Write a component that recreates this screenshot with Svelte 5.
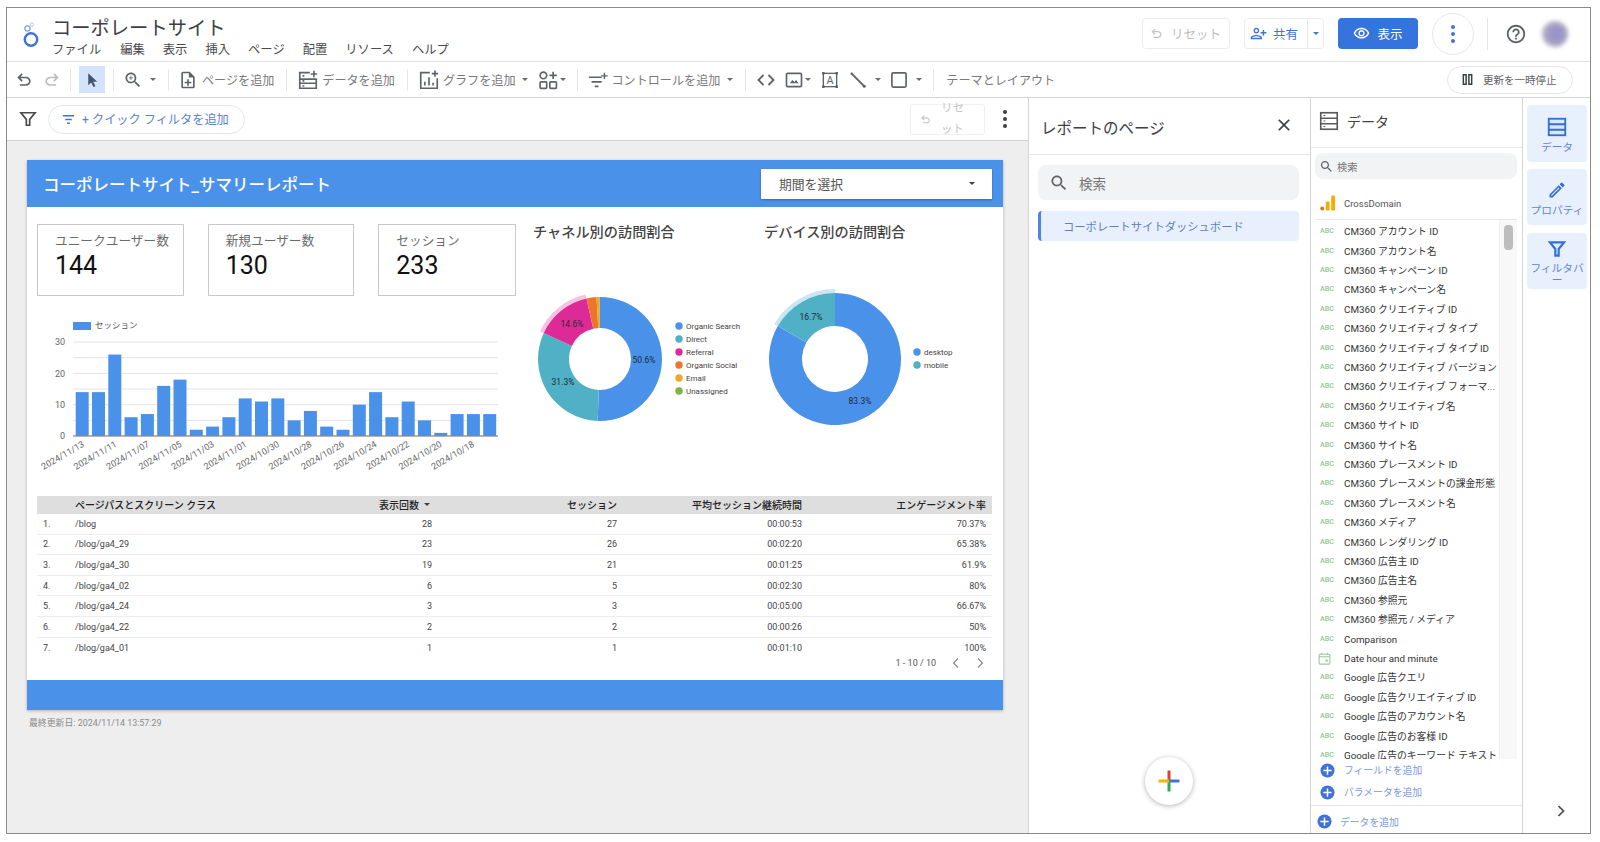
<script>
  const menus = [['ファイル','m0'],['編集','m1'],['表示','m2'],['挿入','m3'],['ページ','m4'],['配置','m5'],['リソース','m6'],['ヘルプ','m7']];

  const bars = [14,14,26,6,7,16,18,2,3,6,12,11,12,5,8,3,2,10,14,6,11,5,1,7,7,7];
  const dates = ['2024/11/13','2024/11/11','2024/11/07','2024/11/05','2024/11/03','2024/11/01','2024/10/30','2024/10/28','2024/10/26','2024/10/24','2024/10/22','2024/10/20','2024/10/18'];
  const grid = [26, 41.7, 57.4, 73, 88.7, 104.4, 120];

  function point(cx, cy, r, t) {
    const a = t * 2 * Math.PI;
    return [cx + r * Math.sin(a), cy - r * Math.cos(a)];
  }
  function ring(cx, cy, r0, r1, t0, t1) {
    const large = t1 - t0 > 0.5 ? 1 : 0;
    const [ax, ay] = point(cx, cy, r1, t0);
    const [bx, by] = point(cx, cy, r1, t1);
    const [dx, dy] = point(cx, cy, r0, t1);
    const [ex, ey] = point(cx, cy, r0, t0);
    return `M${ax} ${ay}A${r1} ${r1} 0 ${large} 1 ${bx} ${by}L${dx} ${dy}A${r0} ${r0} 0 ${large} 0 ${ex} ${ey}Z`;
  }
  function slices(values, cx, cy, r0, r1) {
    let t = 0;
    return values.map(([v, c]) => {
      const s = { d: ring(cx, cy, r0, r1, t, t + v), c };
      t += v;
      return s;
    });
  }
  const channel = slices([[0.506,'#4a91ea'],[0.313,'#4fb0c6'],[0.146,'#de2a97'],[0.026,'#e9762c'],[0.008,'#f5a623'],[0.001,'#7cb342']], 70, 109, 31, 62);
  const device = slices([[0.833,'#4a91ea'],[0.167,'#4fb0c6']], 75, 109, 33, 66);
  const chLegend = [['Organic Search','#4a91ea'],['Direct','#4fb0c6'],['Referral','#de2a97'],['Organic Social','#e9762c'],['Email','#f5a623'],['Unassigned','#7cb342']];
  const devLegend = [['desktop','#4a91ea'],['mobile','#4fb0c6']];

  const rows = [
    ['1.','/blog','28','27','00:00:53','70.37%'],
    ['2.','/blog/ga4_29','23','26','00:02:20','65.38%'],
    ['3.','/blog/ga4_30','19','21','00:01:25','61.9%'],
    ['4.','/blog/ga4_02','6','5','00:02:30','80%'],
    ['5.','/blog/ga4_24','3','3','00:05:00','66.67%'],
    ['6.','/blog/ga4_22','2','2','00:00:26','50%'],
    ['7.','/blog/ga4_01','1','1','00:01:10','100%']
  ];

  const fields = ['CM360 アカウント ID','CM360 アカウント名','CM360 キャンペーン ID','CM360 キャンペーン名','CM360 クリエイティブ ID','CM360 クリエイティブ タイプ','CM360 クリエイティブ タイプ ID','CM360 クリエイティブ バージョン','CM360 クリエイティブ フォーマ...','CM360 クリエイティブ名','CM360 サイト ID','CM360 サイト名','CM360 プレースメント ID','CM360 プレースメントの課金形態','CM360 プレースメント名','CM360 メディア','CM360 レンダリング ID','CM360 広告主 ID','CM360 広告主名','CM360 参照元','CM360 参照元 / メディア','Comparison','Date hour and minute','Google 広告クエリ','Google 広告クリエイティブ ID','Google 広告のアカウント名','Google 広告のお客様 ID','Google 広告のキーワード テキスト'];
  const isLatin = (s) => /^[\x00-\x7f]*$/.test(s);

  const undoD = 'M280-200v-80h284q63 0 109.5-40T720-420q0-60-46.5-100T564-560H312l104 104-56 56-200-200 200-200 56 56-104 104h252q97 0 166.5 63T800-420q0 94-69.5 157T564-200H280Z';
  const searchD = 'M15.5 14h-.79l-.28-.27C15.41 12.59 16 11.11 16 9.5 16 5.91 13.09 3 9.5 3S3 5.91 3 9.5 5.91 16 9.5 16c1.61 0 3.09-.59 4.23-1.57l.27.28v.79l5 4.99L20.49 19l-4.99-5zm-6 0C7.01 14 5 11.99 5 9.5S7.01 5 9.5 5 14 7.01 14 9.5 11.99 14 9.5 14z';
</script>

{#snippet sep(cls)}
  <span class="sep {cls}"></span>
{/snippet}

{#snippet dataIcon(color)}
  <svg class="i22" viewBox="0 0 24 24" fill="none" stroke={color} stroke-width="1.8">
    <rect x="3" y="3" width="18" height="18"/>
    <path d="M3 9h18M3 15h18"/>
    <path d="M6 6h2M6 12h2M6 18h2" stroke-width="1.2"/>
  </svg>
{/snippet}

{#snippet plusRound()}
  <svg class="plusround" viewBox="0 0 16 16">
    <circle cx="8" cy="8" r="7.5" fill="#3f73da"/>
    <path d="M8 3.6v8.8M3.6 8h8.8" stroke="#fff" stroke-width="1.6"/>
  </svg>
{/snippet}

<div class="page">
  <div class="frame">
    <header class="head">
      <svg class="logo" viewBox="0 0 24 32" fill="none">
        <circle cx="12" cy="20.5" r="6.2" stroke="#3f73da" stroke-width="2.4"/>
        <circle cx="8.5" cy="9.5" r="2.6" stroke="#7ea3e6" stroke-width="1.3"/>
        <circle cx="12.8" cy="5.5" r="1.7" stroke="#b5c8ee" stroke-width="1"/>
      </svg>
      <div class="titles">
        <div class="doc">コーポレートサイト</div>
        <nav class="menu">
          {#each menus as [label, cls]}
            <span class={cls}>{label}</span>
          {/each}
        </nav>
      </div>
      <div class="actions">
        <div class="btn reset">
          <svg class="i15" viewBox="0 -960 960 960" fill="#c4c4c4"><path d={undoD}/></svg>
          <span>リセット</span>
        </div>
        <div class="btn share">
          <div class="share-main">
            <svg class="i17 flip" viewBox="0 0 24 24" fill="#3f73da"><path d="M15 12c2.21 0 4-1.79 4-4s-1.79-4-4-4-4 1.79-4 4 1.79 4 4 4zm0-6c1.1 0 2 .9 2 2s-.9 2-2 2-2-.9-2-2 .9-2 2-2zm0 8c-2.67 0-8 1.34-8 4v2h16v-2c0-2.66-5.33-4-8-4zm-6 4c.22-.72 3.31-2 6-2 2.7 0 5.8 1.29 6 2H9zm-3-3v-3h3v-2H6V7H4v3H1v2h3v3h2z"/></svg>
            <span>共有</span>
          </div>
          <div class="share-drop"><span class="caret blue"></span></div>
        </div>
        <div class="view">
          <svg class="i17" viewBox="0 0 24 24" fill="#fff"><path d="M12 6c3.79 0 7.17 2.13 8.82 5.5C19.17 14.87 15.79 17 12 17s-7.17-2.13-8.82-5.5C4.83 8.13 8.21 6 12 6m0-2C7 4 2.73 7.11 1 11.5 2.73 15.89 7 19 12 19s9.27-3.11 11-7.5C21.27 7.11 17 4 12 4zm0 5c1.38 0 2.5 1.12 2.5 2.5S13.38 14 12 14s-2.5-1.12-2.5-2.5S10.62 9 12 9m0-2c-2.48 0-4.5 2.02-4.5 4.5S9.52 16 12 16s4.5-2.02 4.5-4.5S14.48 7 12 7z"/></svg>
          <span>表示</span>
        </div>
        <div class="circle">
          <span class="dots blue"><i></i><i></i><i></i></span>
        </div>
        <span class="vr"></span>
        <svg class="help" viewBox="0 0 24 24" fill="#5f6368"><path d="M11 18h2v-2h-2v2zm1-16C6.48 2 2 6.48 2 12s4.48 10 10 10 10-4.48 10-10S17.52 2 12 2zm0 18c-4.41 0-8-3.59-8-8s3.59-8 8-8 8 3.59 8 8-3.59 8-8 8zm0-14c-2.21 0-4 1.79-4 4h2c0-1.1.9-2 2-2s2 .9 2 2c0 2-3 1.75-3 5h2c0-2.25 3-2.5 3-5 0-2.21-1.79-4-4-4z"/></svg>
        <span class="avatar"></span>
      </div>
    </header>

    <div class="toolbar">
      <svg class="i20 ml7" viewBox="0 -960 960 960" fill="#5f6368"><path d={undoD}/></svg>
      <svg class="i20 flip ml8" viewBox="0 -960 960 960" fill="#bdbdbd"><path d={undoD}/></svg>
      {@render sep('ml8')}
      <div class="select ml8">
        <svg class="i18" viewBox="0 0 24 24" fill="#44546f"><path d="M7 3v16l4-3.6 3 6 2.6-1.2-3-5.9H19z"/></svg>
      </div>
      {@render sep('ml8')}
      <svg class="i20 ml9" viewBox="0 0 24 24" fill="#5f6368"><path d={searchD}/><path d="M12 10h-2v2H9v-2H7V9h2V7h1v2h2v1z"/></svg>
      <span class="caret ml7"></span>
      {@render sep('ml12')}
      <svg class="i20 ml9" viewBox="0 0 24 24" fill="#5f6368"><path d="M13 11h-2v3H8v2h3v3h2v-3h3v-2h-3zm1-9H6c-1.1 0-2 .9-2 2v16c0 1.1.89 2 1.99 2H18c1.1 0 2-.9 2-2V8l-6-6zm4 18H6V4h7v5h5v11z"/></svg>
      <span class="tb-text ml4">ページを追加</span>
      {@render sep('ml12')}
      <svg class="i22 ml10" viewBox="0 0 24 24" fill="none" stroke="#5f6368" stroke-width="1.8">
        <path d="M14 4H3v17h18V11H3M3 15.5h18M6 7.5h2M6 13h2M6 18.5h2"/>
        <path d="M18.5 2v7M15 5.5h7" stroke="#5f6368"/>
      </svg>
      <span class="tb-text ml3">データを追加</span>
      {@render sep('ml12')}
      <svg class="i22 ml10" viewBox="0 0 24 24" fill="none" stroke="#5f6368" stroke-width="1.8">
        <path d="M13 4H3v17h18V10"/>
        <path d="M7.5 18v-4M12 18V9M16.5 18v-3"/>
        <path d="M18.5 1.5v7M15 5h7"/>
      </svg>
      <span class="tb-text ml3">グラフを追加</span>
      <span class="caret ml7"></span>
      <svg class="i22 ml9" viewBox="0 0 24 24" fill="none" stroke="#5f6368" stroke-width="1.8">
        <circle cx="7" cy="7" r="3.6"/>
        <rect x="3.4" y="14" width="7.2" height="7.2" rx="1"/>
        <rect x="14" y="14" width="7.2" height="7.2" rx="1"/>
        <path d="M17.6 3v8M13.6 7h8"/>
      </svg>
      <span class="caret ml1"></span>
      {@render sep('ml11')}
      <svg class="i22 ml9" viewBox="0 0 24 24" fill="none" stroke="#5f6368" stroke-width="1.8">
        <path d="M2 9h14M5 14h11M8.5 19h4"/>
        <path d="M19 4v7M15.5 7.5h7" stroke-width="1.6"/>
      </svg>
      <span class="tb-text ml2">コントロールを追加</span>
      <span class="caret ml7"></span>
      {@render sep('ml12')}
      <svg class="i20 ml10" viewBox="0 0 24 24" fill="none" stroke="#5f6368" stroke-width="2.2"><path d="M9 6l-6 6 6 6M15 6l6 6-6 6"/></svg>
      <svg class="i20 ml8" viewBox="0 0 24 24" fill="none" stroke="#5f6368" stroke-width="2">
        <rect x="3" y="4" width="18" height="16" rx="1.5"/>
        <path d="M7 16l3-4 2.5 2.5L14.5 12l3 4z" fill="#5f6368" stroke="none"/>
      </svg>
      <span class="caret ml1"></span>
      <svg class="i20 ml9" viewBox="0 0 24 24" fill="none" stroke="#5f6368" stroke-width="1.6">
        <rect x="4" y="4" width="16" height="16"/>
        <path d="M2.5 2.5h3v3h-3zM18.5 2.5h3v3h-3zM2.5 18.5h3v3h-3zM18.5 18.5h3v3h-3z" fill="#5f6368" stroke="none"/>
        <text x="12" y="17" text-anchor="middle" class="iconA">A</text>
      </svg>
      <svg class="i20 ml8" viewBox="0 0 24 24" fill="#5f6368" stroke="#5f6368" stroke-width="2.4">
        <path d="M5 5l14 14"/>
        <circle cx="4.5" cy="4.5" r="1.5" stroke="none"/>
        <circle cx="19.5" cy="19.5" r="1.8" stroke="none"/>
      </svg>
      <span class="caret ml7"></span>
      <svg class="i20 ml8" viewBox="0 0 24 24" fill="none" stroke="#5f6368" stroke-width="2"><rect x="3.5" y="3.5" width="17" height="17" rx="1.5"/></svg>
      <span class="caret ml7"></span>
      {@render sep('ml11')}
      <span class="tb-text ml12">テーマとレイアウト</span>
      <div class="pause">
        <svg class="i13" viewBox="0 0 14 14" fill="none" stroke="#3c4043" stroke-width="1.6"><path d="M2.5 2h3v10h-3zM8.5 2h3v10h-3z"/></svg>
        <span>更新を一時停止</span>
      </div>
    </div>

    <main class="main">
      <section class="work">
        <div class="filterbar">
          <svg class="i20 fb-funnel" viewBox="0 0 24 24" fill="none" stroke="#4a4a4a" stroke-width="2"><path d="M3.5 4.5h17l-6.5 8v7h-4v-7z"/></svg>
          <div class="chip">
            <svg class="i15" viewBox="0 0 16 16" stroke="#3f73da" stroke-width="1.5"><path d="M2 4h12M4.5 8h7M6.5 12h3"/></svg>
            <span>+ クイック フィルタを追加</span>
          </div>
          <div class="fb-right">
            <div class="mini-reset">
              <svg class="i13" viewBox="0 -960 960 960" fill="#c4c4c4"><path d={undoD}/></svg>
              <span>リセット</span>
            </div>
            <span class="dots dark"><i></i><i></i><i></i></span>
          </div>
        </div>

        <div class="canvas">
          <article class="report">
            <div class="r-head">
              <h1>コーポレートサイト_サマリーレポート</h1>
              <div class="period">
                <span>期間を選択</span>
                <span class="caret dark"></span>
              </div>
            </div>

            <div class="r-body">
              <div class="r-top">
                <div class="r-left">
                  <div class="cards">
                    <div class="card c1"><div class="c-label">ユニークユーザー数</div><div class="c-value">144</div></div>
                    <div class="card c2"><div class="c-label">新規ユーザー数</div><div class="c-value">130</div></div>
                    <div class="card c3"><div class="c-label">セッション</div><div class="c-value">233</div></div>
                  </div>
                  <svg class="barchart" width="480" height="170" viewBox="0 0 480 170">
                    <rect x="36" y="6" width="18" height="8" fill="#4a91ea"/>
                    <text x="58" y="12" class="t85">セッション</text>
                    {#each grid as g, i}
                      <line x1="36" x2="461" y1={g} y2={g} stroke={i === 6 ? '#6b6b6b' : '#e4e4e4'}/>
                    {/each}
                    {#each [[30,26],[20,57.4],[10,88.7],[0,120]] as [v, y]}
                      <text x="28" y={y + 3.2} text-anchor="end" class="t9">{v}</text>
                    {/each}
                    {#each bars as b, i}
                      <rect x={38.7 + i * 16.3} y={120 - b * 3.133} width="13" height={b * 3.133} fill="#4a91ea"/>
                    {/each}
                    {#each dates as d, i}
                      <text transform={`translate(${48 + i * 32.5} 130) rotate(-30)`} text-anchor="end" class="t9">{d}</text>
                    {/each}
                  </svg>
                </div>

                <div class="donut d1">
                  <h2>チャネル別の訪問割合</h2>
                  <svg width="230" height="190" viewBox="0 0 230 190">
                    <path d={ring(70, 109, 62, 66, 0.8185, 0.965)} fill="#f6c2e2"/>
                    {#each channel as s}<path d={s.d} fill={s.c}/>{/each}
                    <text x="114" y="113" text-anchor="middle" class="t85 pct">50.6%</text>
                    <text x="33" y="135" text-anchor="middle" class="t85 pct">31.3%</text>
                    <text x="42" y="77" text-anchor="middle" class="t85 pct">14.6%</text>
                    {#each chLegend as [name, color], i}
                      <circle cx="149" cy={76 + i * 13} r="3.7" fill={color}/>
                      <text x="156" y={79 + i * 13} class="t85 leg">{name}</text>
                    {/each}
                  </svg>
                </div>

                <div class="donut d2">
                  <h2>デバイス別の訪問割合</h2>
                  <svg width="240" height="190" viewBox="0 0 240 190">
                    <path d={ring(75, 109, 66, 70, 0.833, 1)} fill="#cbe6ec"/>
                    {#each device as s}<path d={s.d} fill={s.c}/>{/each}
                    <text x="100" y="154" text-anchor="middle" class="t85 pct">83.3%</text>
                    <text x="51" y="70" text-anchor="middle" class="t85 pct">16.7%</text>
                    {#each devLegend as [name, color], i}
                      <circle cx="157" cy={102 + i * 13} r="3.7" fill={color}/>
                      <text x="164" y={105 + i * 13} class="t85 leg">{name}</text>
                    {/each}
                  </svg>
                </div>
              </div>

              <div class="table">
                <div class="tr th">
                  <span></span>
                  <span class="left">ページパスとスクリーン クラス</span>
                  <span class="sorted">表示回数<span class="caret dark small"></span></span>
                  <span>セッション</span>
                  <span>平均セッション継続時間</span>
                  <span>エンゲージメント率</span>
                </div>
                {#each rows as r}
                  <div class="tr td">
                    <span class="left idx">{r[0]}</span>
                    <span class="left">{r[1]}</span>
                    <span>{r[2]}</span>
                    <span>{r[3]}</span>
                    <span>{r[4]}</span>
                    <span>{r[5]}</span>
                  </div>
                {/each}
                <div class="pager">
                  <span>1 - 10 / 10</span>
                  <svg class="chev first" viewBox="0 0 10 12" fill="none" stroke="#8a8a8a" stroke-width="1.2"><path d="M7 1.5L2.5 6 7 10.5"/></svg>
                  <svg class="chev" viewBox="0 0 10 12" fill="none" stroke="#8a8a8a" stroke-width="1.2"><path d="M3 1.5L7.5 6 3 10.5"/></svg>
                </div>
              </div>
            </div>

            <div class="r-foot"></div>
          </article>
          <div class="updated">最終更新日: 2024/11/14 13:57:29</div>
        </div>
      </section>

      <aside class="pages">
        <div class="p-head">
          <span>レポートのページ</span>
          <svg class="i20" viewBox="0 0 24 24" fill="#3c4043"><path d="M19 6.41 17.59 5 12 10.59 6.41 5 5 6.41 10.59 12 5 17.59 6.41 19 12 13.41 17.59 19 19 17.59 13.41 12z"/></svg>
        </div>
        <div class="p-search">
          <svg class="i20" viewBox="0 0 24 24" fill="#5f6368"><path d={searchD}/></svg>
          <span>検索</span>
        </div>
        <div class="p-item">コーポレートサイトダッシュボード</div>
        <div class="fab">
          <svg width="24" height="24" viewBox="0 0 24 24" stroke-width="3">
            <path d="M12 1.5V12" stroke="#d9432f"/>
            <path d="M12 12h10.5" stroke="#3f73da"/>
            <path d="M12 12v10.5" stroke="#34a853"/>
            <path d="M1.5 12H12" stroke="#f4b400"/>
          </svg>
        </div>
      </aside>

      <aside class="data">
        <div class="d-head">
          {@render dataIcon('#5a5a5a')}
          <span>データ</span>
        </div>
        <div class="d-search">
          <svg class="i15" viewBox="0 0 24 24" fill="#5f6368"><path d={searchD}/></svg>
          <span>検索</span>
        </div>
        <div class="d-source">
          <svg width="16" height="16" viewBox="0 0 16 16">
            <circle cx="2.2" cy="13.5" r="1.9" fill="#e8710a"/>
            <rect x="5.8" y="6.5" width="3.8" height="9" rx="1" fill="#f9ab00"/>
            <rect x="11.2" y="0.5" width="3.8" height="15" rx="1" fill="#f9ab00"/>
          </svg>
          <span>CrossDomain</span>
        </div>
        <div class="d-listwrap">
          <div class="d-list">
            {#each fields as f}
              <div class="field" class:latin={isLatin(f)}>
                {#if f === 'Date hour and minute'}
                  <svg class="cal" viewBox="0 0 12 12" fill="none" stroke="#9ac79a" stroke-width="1"><rect x="1" y="2" width="10" height="9.2" rx="1"/><path d="M1 4.4h10M3.4.6v1.6M8.6.6v1.6"/><rect x="7" y="7" width="2" height="2" fill="#9ac79a" stroke="none"/></svg>
                {:else}
                  <span class="abc">ABC</span>
                {/if}
                <span class="f-name">{f}</span>
              </div>
            {/each}
          </div>
          <div class="gutter"><div class="thumb"></div></div>
        </div>
        <div class="d-adds">
          <div class="add">{@render plusRound()}<span>フィールドを追加</span></div>
          <div class="add">{@render plusRound()}<span>パラメータを追加</span></div>
        </div>
        <div class="d-addsrc">
          {@render plusRound()}<span>データを追加</span>
        </div>
      </aside>

      <aside class="rail">
        <div class="tab t1">
          <svg class="i22" viewBox="0 0 24 24" fill="#dbe7fb" stroke="#2f6fde" stroke-width="2">
            <rect x="3" y="3" width="18" height="18"/>
            <path d="M3 9h18M3 15h18"/>
          </svg>
          <span>データ</span>
        </div>
        <div class="tab t2">
          <svg class="i20" viewBox="0 0 24 24" fill="#2f6fde"><path d="M3 17.25V21h3.75L17.81 9.94l-3.75-3.75L3 17.25zM5.92 19H5v-.92l9.06-9.06.92.92L5.92 19zM20.71 7.04a1 1 0 0 0 0-1.41l-2.34-2.34a1 1 0 0 0-1.41 0l-1.83 1.83 3.75 3.75 1.83-1.83z"/></svg>
          <span>プロパティ</span>
        </div>
        <div class="tab t3">
          <svg class="i20" viewBox="0 0 24 24" fill="none" stroke="#2f6fde" stroke-width="2.6"><path d="M3.5 4h17l-6.5 8v8h-4v-8z"/></svg>
          <span>フィルタバー</span>
        </div>
        <svg class="rail-chev" viewBox="0 0 12 14" fill="none" stroke="#4a4a4a" stroke-width="1.7"><path d="M3.5 2l5 5-5 5"/></svg>
      </aside>
    </main>
  </div>
</div>

<style>
  :global(body) { margin: 0; background: #fff; }
  .page {
    width: 1600px; height: 842px; box-sizing: border-box; padding: 7px 0 0 6px; overflow: hidden;
    font-family: Roboto, "Noto Sans CJK JP", sans-serif; color: #3c4043;
  }
  .frame {
    width: 1585px; height: 827px; box-sizing: border-box; border: 1px solid #8a8a8a;
    display: flex; flex-direction: column; background: #fff;
  }
  svg { display: block; flex: none; }
  .flip { transform: scaleX(-1); }
  .i13 { width: 13px; height: 13px; }
  .i15 { width: 15px; height: 15px; }
  .i17 { width: 17px; height: 17px; }
  .i18 { width: 18px; height: 18px; }
  .i20 { width: 20px; height: 20px; }
  .i22 { width: 22px; height: 22px; }

  .head { height: 53px; flex: none; display: flex; align-items: center; border-bottom: 1px solid #e0e0e0; }
  .logo { width: 24px; height: 32px; margin-left: 12px; }
  .titles { margin-left: 9px; align-self: flex-start; padding-top: 9px; }
  .doc { font-size: 19.3px; line-height: 24px; color: #3c4043; }
  .menu { display: flex; font-size: 12.3px; line-height: 16px; color: #4a4a4a; margin-top: 1px; }
  .m1 { margin-left: 19px; }
  .m2, .m3, .m4, .m5, .m6, .m7 { margin-left: 18px; }

  .actions { margin-left: auto; display: flex; align-items: center; height: 100%; padding-bottom: 2px; box-sizing: border-box; }
  .btn { height: 31px; box-sizing: border-box; border: 1px solid #ececec; border-radius: 4px; display: flex; align-items: center; font-size: 12.5px; }
  .reset { width: 88px; padding-left: 6px; gap: 7px; color: #bdbdbd; }
  .share { width: 80px; margin-left: 14px; color: #3f73da; }
  .share-main { width: 63px; height: 100%; display: flex; align-items: center; gap: 6px; padding-left: 5px; box-sizing: border-box; border-right: 1px solid #e6e6e6; }
  .share-drop { flex: 1; display: flex; justify-content: center; }
  .view { width: 80px; height: 31px; margin-left: 14px; border-radius: 4px; background: #3574dc; color: #fff; display: flex; align-items: center; justify-content: center; gap: 7px; font-size: 12.5px; }
  .circle { width: 42px; height: 42px; box-sizing: border-box; margin-left: 14px; border-radius: 50%; border: 1px solid #e8e8e8; display: flex; align-items: center; justify-content: center; }
  .dots { display: flex; flex-direction: column; gap: 3px; }
  .dots i { width: 4px; height: 4px; border-radius: 50%; background: #3f73da; }
  .dots.dark i { background: #3c4043; }
  .vr { width: 1px; height: 32px; background: #e6e6e6; margin-left: 13px; }
  .help { width: 22px; height: 22px; margin-left: 17px; }
  .avatar { width: 26px; height: 26px; margin: 0 22px 0 15px; border-radius: 50%; background: radial-gradient(circle at 55% 50%, #9a94c8 0 30%, #b5aec4 65%, #cfcbd2 100%); filter: blur(2px); }

  .caret { display: block; flex: none; width: 0; height: 0; border-left: 3.5px solid transparent; border-right: 3.5px solid transparent; border-top: 3.5px solid #6b6b6b; }
  .caret.blue { border-top-color: #3f73da; }
  .caret.dark { border-top-color: #3c4043; }
  .caret.small { margin-left: 5px; border-left-width: 3px; border-right-width: 3px; border-top-width: 3px; }

  .toolbar { height: 35px; flex: none; display: flex; align-items: center; border-bottom: 1px solid #d4d4d4; }
  .sep { display: block; flex: none; width: 1px; height: 22px; background: #e8e8e8; }
  .tb-text { font-size: 12.1px; color: #7a7a7a; white-space: nowrap; }
  .select { width: 26px; height: 27px; background: #d3e3fa; display: flex; align-items: center; justify-content: center; flex: none; }
  .ml1 { margin-left: 1px; } .ml2 { margin-left: 2px; } .ml3 { margin-left: 3px; } .ml4 { margin-left: 4px; }
  .ml7 { margin-left: 7px; } .ml8 { margin-left: 8px; } .ml9 { margin-left: 9px; }
  .ml10 { margin-left: 10px; } .ml11 { margin-left: 11px; } .ml12 { margin-left: 12px; }
  .pause { margin-left: auto; margin-right: 17px; width: 126px; height: 28px; box-sizing: border-box; border: 1px solid #e6e6e6; border-radius: 14px; display: flex; align-items: center; padding-left: 13px; gap: 9px; font-size: 10.5px; color: #5f6368; }

  .main { flex: 1; min-height: 0; display: flex; }
  .work { width: 1021px; flex: none; display: flex; flex-direction: column; }
  .filterbar { height: 42px; flex: none; display: flex; align-items: center; border-bottom: 1px solid #d4d4d4; }
  .fb-funnel { margin-left: 11px; }
  .chip { margin-left: 10px; width: 197px; height: 29px; box-sizing: border-box; border: 1px solid #e6e6e6; border-radius: 15px; display: flex; align-items: center; gap: 6px; padding-left: 12px; font-size: 12.2px; color: #5b82cf; }
  .fb-right { margin-left: auto; display: flex; align-items: center; }
  .mini-reset { width: 75px; height: 31px; box-sizing: border-box; border: 1px solid #f0f0f0; border-radius: 3px; display: flex; align-items: center; gap: 6px; padding-left: 8px; }
  .mini-reset span { width: 25px; margin-left: 2px; font-size: 11.5px; line-height: 21px; color: #c4c4c4; text-align: center; display: block; flex: none; }
  .fb-right .dots { margin: 0 21px 0 18px; }

  .canvas { flex: 1; background: #eeeeee; padding: 19px 0 0 20px; min-height: 0; }
  .report { width: 976px; box-shadow: 0 1px 3px rgba(0,0,0,.25); }
  .r-head { height: 47px; background: #4a91ea; display: flex; align-items: center; justify-content: space-between; padding: 0 11px 0 16px; }
  h1 { margin: 0; font-size: 16.5px; font-weight: 500; color: #fff; }
  .period { width: 231px; height: 30px; background: #fff; box-shadow: 0 1px 2px rgba(0,0,0,.3); display: flex; align-items: center; justify-content: space-between; padding: 0 17px 0 18px; box-sizing: border-box; font-size: 12.8px; color: #555; }
  .r-body { height: 473px; background: #fff; }
  .r-top { height: 289px; display: flex; }
  .r-left { width: 479px; margin-left: 10px; padding-top: 17px; flex: none; }
  .cards { display: flex; gap: 24px; }
  .card { height: 72px; box-sizing: border-box; border: 1px solid #c8c8c8; padding: 5px 0 0 17px; }
  .c1 { width: 147px; } .c2 { width: 147px; } .c3 { width: 138px; }
  .c-label { font-size: 12.7px; line-height: 21px; color: #6b6b6b; white-space: nowrap; }
  .c-value { font-size: 25px; line-height: 30px; color: #111; margin-top: 0; }
  .barchart { margin-top: 20px; }
  .t9 { font-size: 9px; fill: #666; font-family: Roboto, sans-serif; }
  .t85 { font-size: 8.5px; fill: #555; font-family: Roboto, "Noto Sans CJK JP", sans-serif; }
  .pct { fill: #1f2a33; }
  .leg { fill: #444; font-size: 8px; }
  .donut { flex: none; padding-top: 16px; }
  .d1 { width: 230px; margin-left: 14px; }
  .d2 { width: 240px; }
  h2 { margin: 0 0 9px; font-size: 14.2px; line-height: 18px; font-weight: 500; color: #444; white-space: nowrap; }
  .d1 h2 { padding-left: 3px; }
  .d2 h2 { padding-left: 4px; }

  .table { margin-left: 10px; width: 955px; }
  .tr { display: grid; grid-template-columns: 38px 207px 150px 185px 185px 184px; padding-right: 6px; align-items: center; text-align: right; }
  .left { text-align: left; }
  .th { height: 18px; box-sizing: border-box; padding-bottom: 1px; background: #dedede; font-size: 10px; font-weight: 500; color: #222; }
  .sorted { display: flex; align-items: center; justify-content: flex-end; padding-right: 2px; }
  .td { height: 20.6px; box-sizing: border-box; border-bottom: 1px solid #ededed; font-size: 9px; color: #444; }
  .td:nth-last-child(2) { border-bottom: none; }
  .idx { padding-left: 6px; }
  .pager { height: 14px; margin-top: -2px; display: flex; align-items: center; justify-content: flex-end; font-size: 9px; color: #555; padding-right: 7px; }
  .chev { width: 10px; height: 12px; margin-left: 14px; }
  .chev.first { margin-left: 15px; }
  .r-foot { height: 30px; background: #4a91ea; }
  .updated { margin: 7px 0 0 2px; font-size: 8.9px; line-height: 12px; color: #8a8a8a; }

  .pages { width: 282px; flex: none; box-sizing: border-box; border-left: 1px solid #d4d4d4; position: relative; }
  .p-head { height: 57px; box-sizing: border-box; border-bottom: 1px solid #e6e6e6; display: flex; align-items: center; justify-content: space-between; padding: 0 16px 0 12px; font-size: 15.5px; color: #3c4043; }
  .p-head span { margin-top: 2px; }
  .p-head svg { margin-top: -3px; }
  .p-search { margin: 10px 11px 0 9px; height: 35px; background: #f1f3f4; border-radius: 8px; display: flex; align-items: center; gap: 10px; padding-left: 11px; font-size: 13.5px; color: #777; }
  .p-item { margin: 11px 11px 0 9px; height: 30px; box-sizing: border-box; background: #e8f0fe; border-left: 3px solid #4f83ea; border-radius: 4px; padding-left: 22px; display: flex; align-items: center; font-size: 11.3px; color: #5f7fbf; }
  .fab { position: absolute; left: 116px; top: 659px; width: 48px; height: 48px; background: #fff; border-radius: 50%; box-shadow: 0 1px 5px rgba(0,0,0,.3); display: flex; align-items: center; justify-content: center; }

  .data { width: 212px; flex: none; box-sizing: border-box; border-left: 1px solid #d4d4d4; display: flex; flex-direction: column; }
  .d-head { height: 50px; flex: none; box-sizing: border-box; border-bottom: 1px solid #e6e6e6; display: flex; align-items: center; gap: 7px; padding: 0 0 4px 7px; font-size: 14px; color: #444; }
  .d-search { margin: 5px 5px 0 4px; height: 26px; flex: none; background: #f1f3f4; border-radius: 8px; display: flex; align-items: center; gap: 3px; padding-left: 4px; font-size: 10.3px; color: #777; }
  .d-source { margin: 0 5px 0 4px; height: 41px; flex: none; box-sizing: border-box; border-bottom: 1px solid #e6e6e6; padding: 8px 0 0 5px; display: flex; align-items: center; gap: 8px; font-size: 9.5px; color: #555; }
  .d-listwrap { height: 540px; flex: none; overflow: hidden; display: flex; margin-right: 5px; }
  .d-list { flex: 1; min-width: 0; padding-top: 1.4px; }
  .field { height: 19.42px; display: flex; align-items: center; font-size: 9.8px; color: #333; white-space: nowrap; }
  .latin { padding-top: 1.5px; box-sizing: border-box; }
  .abc { width: 33px; padding-left: 9px; box-sizing: border-box; font-size: 7.2px; line-height: 10px; color: #93c793; font-weight: 500; flex: none; }
  .cal { width: 13px; height: 13px; margin: 0 13px 0 7px; flex: none; }
  .f-name { overflow: hidden; }
  .gutter { width: 18px; flex: none; background: #f8f8f8; border-left: 1px solid #efefef; box-sizing: border-box; }
  .thumb { width: 9px; height: 25px; margin: 5px 0 0 4px; background: #bdbdbd; border-radius: 4px; }
  .d-adds { height: 47px; margin-top: -1px; flex: none; box-sizing: border-box; border-bottom: 1px solid #e6e6e6; background: #fff; }
  .add { height: 22px; display: flex; align-items: center; gap: 9px; padding-left: 9px; font-size: 9.8px; color: #7a9ae0; }
  .d-addsrc { flex: 1; display: flex; align-items: center; gap: 8px; padding: 4px 0 0 6px; font-size: 9.8px; color: #7a9ae0; }
  .plusround { width: 15px; height: 15px; }

  .rail { flex: 1; box-sizing: border-box; border-left: 1px solid #d4d4d4; padding: 7px 3px 0 4px; position: relative; }
  .tab { background: #e8f0fe; border-radius: 4px; display: flex; flex-direction: column; align-items: center; box-sizing: border-box; font-size: 10.7px; line-height: 12px; color: #5f86d8; text-align: center; }
  .t1 { height: 57px; padding-top: 11px; gap: 4px; }
  .t2 { height: 56px; margin-top: 7px; padding-top: 11px; gap: 5px; }
  .t3 { height: 56px; margin-top: 8px; padding-top: 6px; gap: 4px; }
  .rail-chev { position: absolute; left: 32px; bottom: 15px; width: 12px; height: 14px; }
  .iconA { font-size: 13px; fill: #5f6368; stroke: none; font-family: Roboto, sans-serif; }
</style>
